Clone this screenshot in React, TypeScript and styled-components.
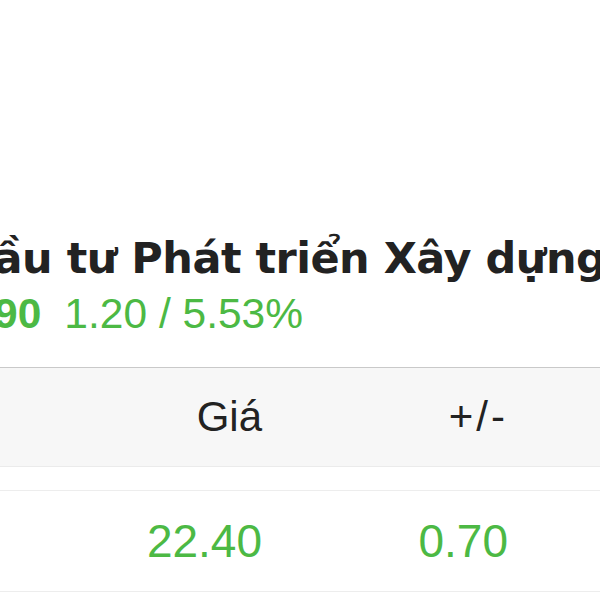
import styled, { createGlobalStyle } from 'styled-components';

const GlobalStyle = createGlobalStyle`
  html, body {
    margin: 0;
    padding: 0;
    background: #ffffff;
  }
  body {
    font-family: 'Liberation Sans', Arial, sans-serif;
  }
`;

const green = '#4cb944';

const Screen = styled.div`
  width: 600px;
  height: 600px;
  overflow: hidden;
  background: #ffffff;
  display: flex;
  flex-direction: column;
`;

const Summary = styled.div`
  padding-top: 229px;
  display: flex;
  flex-direction: column;
  white-space: nowrap;
`;

const Title = styled.h1`
  margin: 0 0 0 -42px;
  font-family: 'DejaVu Sans', 'Liberation Sans', sans-serif;
  font-size: 43px;
  line-height: 58px;
  font-weight: 700;
  letter-spacing: -0.5px;
  color: #222222;
`;

const PriceLine = styled.div`
  margin-left: -65px;
  display: flex;
  align-items: baseline;
  gap: 23px;
  font-size: 42.5px;
  line-height: 54px;
  color: ${green};
`;

const Price = styled.span`
  font-weight: 700;
`;

const Table = styled.div`
  margin-top: 26px;
  display: flex;
  flex-direction: column;
`;

const Row = styled.div<{ $head?: boolean }>`
  display: grid;
  grid-template-columns: 16px 246px 246px 1fr;
  align-items: center;
  height: ${(p) => (p.$head ? '98px' : '100px')};
  background: ${(p) => (p.$head ? '#f7f7f7' : '#ffffff')};
  border-top: 1px solid ${(p) => (p.$head ? '#c9c9c9' : '#ededed')};
  border-bottom: 1px solid ${(p) => (p.$head ? '#ebebeb' : '#ededed')};
`;

const Spacer = styled.div`
  height: 23px;
  background: #ffffff;
`;

const Cell = styled.div<{ $head?: boolean; $wide?: boolean }>`
  text-align: right;
  font-size: ${(p) => (p.$head ? '42px' : '46px')};
  letter-spacing: ${(p) => (p.$wide ? '3px' : '0')};
  color: ${(p) => (p.$head ? '#222222' : green)};
`;

export default function App() {
  return (
    <Screen>
      <GlobalStyle />
      <Summary>
        <Title>Đầu tư Phát triển Xây dựng DIG</Title>
        <PriceLine>
          <Price>22.90</Price>
          <span>1.20 / 5.53%</span>
        </PriceLine>
      </Summary>
      <Table>
        <Row $head>
          <span />
          <Cell $head>Giá</Cell>
          <Cell $head $wide>+/-</Cell>
          <span />
        </Row>
        <Spacer />
        <Row>
          <span />
          <Cell>22.40</Cell>
          <Cell>0.70</Cell>
          <span />
        </Row>
      </Table>
    </Screen>
  );
}
